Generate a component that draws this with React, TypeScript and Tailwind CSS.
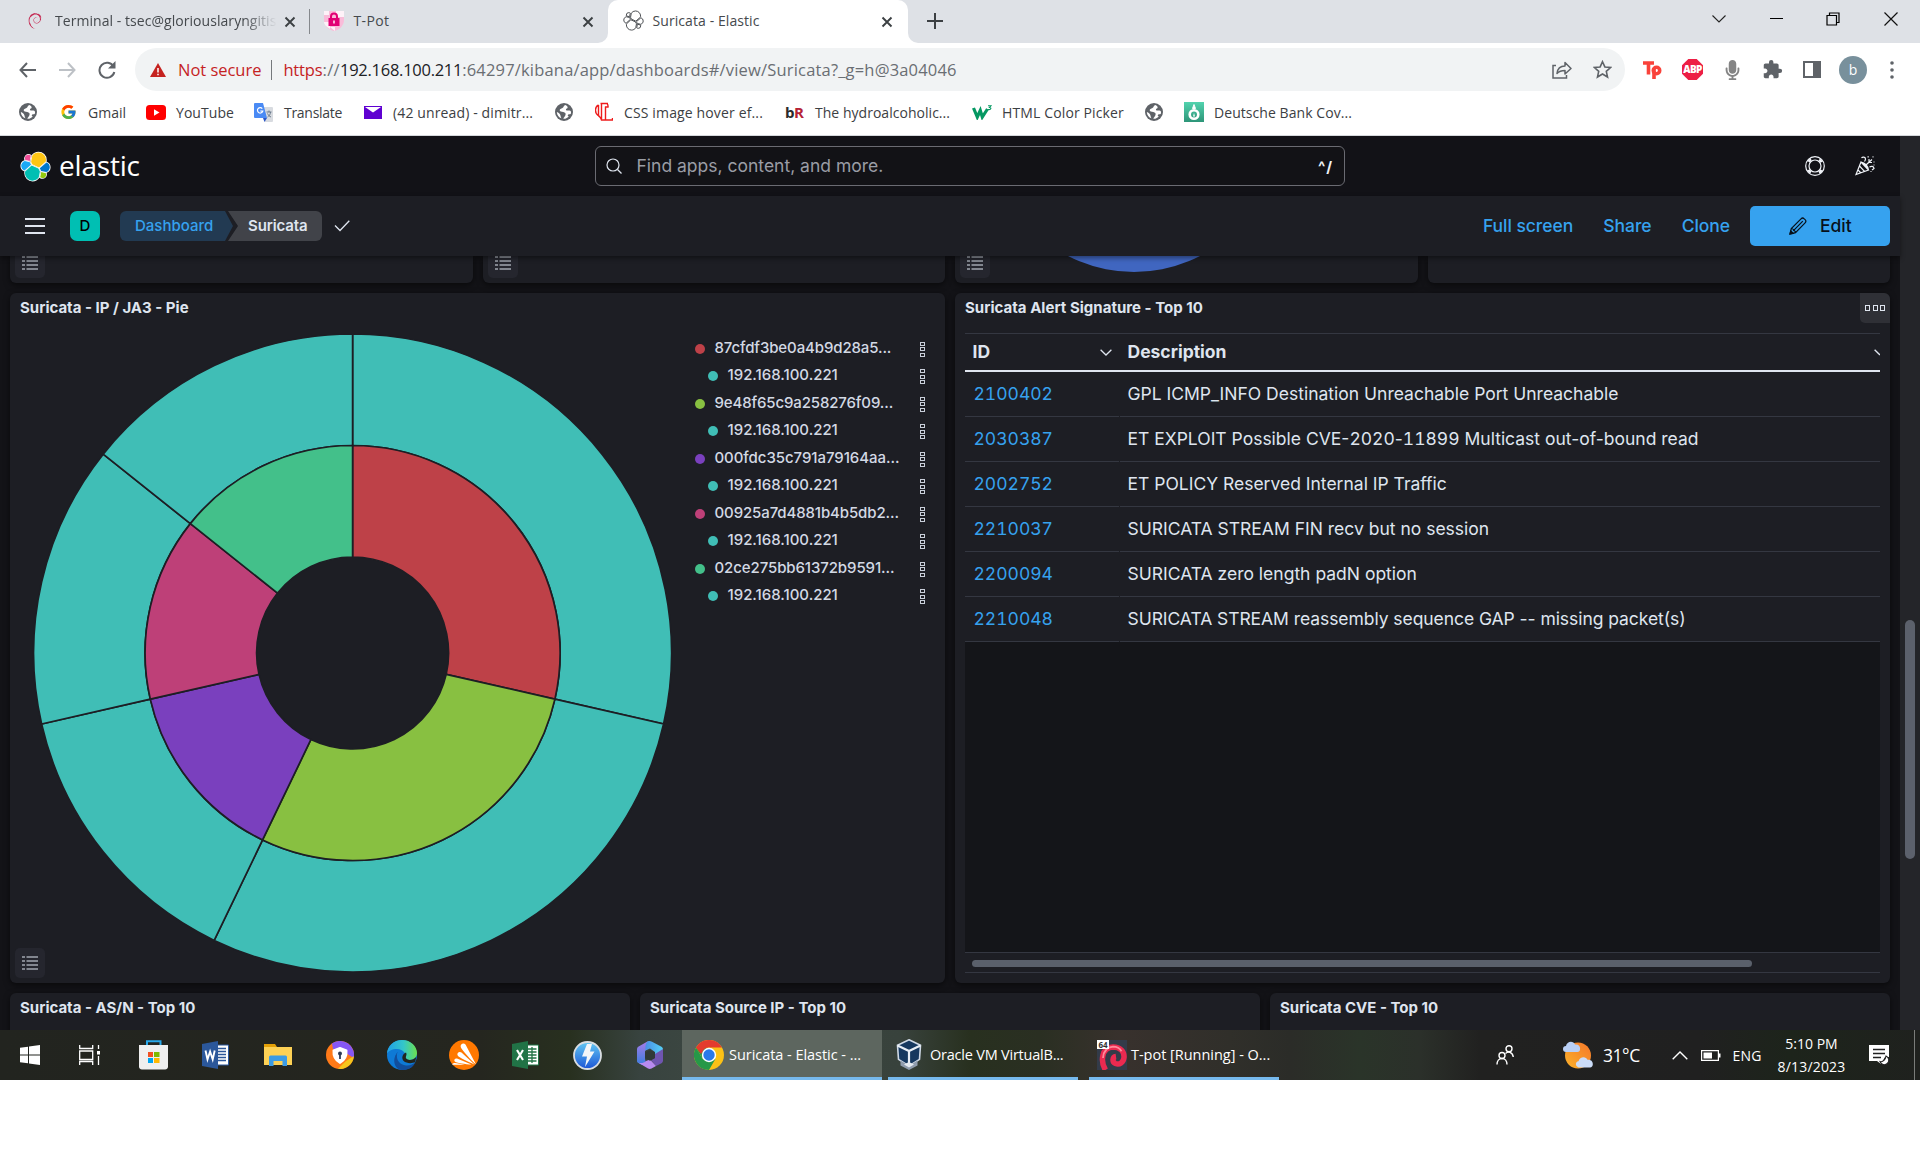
import React from "react";
import { FcGoogle } from "react-icons/fc";
import { FaMicrophone } from "react-icons/fa";
import { MdExtension } from "react-icons/md";
import { SiDebian } from "react-icons/si";

const ELASTIC = [
  { c: "#fec514", d: "M12.58 13.787l7.002 3.211 7.066-6.213a7.849 7.849 0 00.152-1.557c0-4.287-3.472-7.76-7.744-7.76a7.73 7.73 0 00-6.4 3.38l-1.176 6.124 1.1 2.815z" },
  { c: "#00bfb3", d: "M5.333 21.215a7.95 7.95 0 00-.152 1.58c0 4.3 3.49 7.8 7.777 7.8 2.58 0 4.98-1.278 6.43-3.406l1.163-6.086-1.556-2.985-7.028-3.21-6.634 6.307z" },
  { c: "#f04e98", d: "M5.29 9.094l4.799 1.138 1.05-5.479a3.79 3.79 0 00-2.303-.778 3.8 3.8 0 00-3.792 3.807c0 .449.083.894.247 1.312z" },
  { c: "#1ba9f5", d: "M4.872 10.24c-2.145.713-3.639 2.776-3.639 5.046 0 2.21 1.364 4.183 3.411 4.964l6.735-6.113-1.236-2.652-5.27-1.246z" },
  { c: "#93c90e", d: "M20.87 27.189a3.75 3.75 0 002.29.784 3.8 3.8 0 003.793-3.807c0-.46-.081-.9-.242-1.31l-4.795-1.126-1.045 5.459z" },
  { c: "#0077cc", d: "M21.848 20.564l5.28 1.238c2.146-.712 3.639-2.776 3.639-5.047a5.33 5.33 0 00-3.42-4.958l-6.905 6.077 1.406 2.69z" },
];

function ElasticLogo() {
  return (
    <svg viewBox="0 0 32 32" className="h-[31px] w-[31px] shrink-0">
      {ELASTIC.map((p) => <path key={p.c} d={p.d} fill="#fff" stroke="#fff" strokeWidth="1.6" />)}
      {ELASTIC.map((p) => <path key={p.c} d={p.d} fill={p.c} />)}
    </svg>
  );
}

function ElasticOutline() {
  return (
    <svg viewBox="0 0 32 32" className="h-[21px] w-[21px] shrink-0">
      {ELASTIC.map((p) => <path key={p.c} d={p.d} fill="#fff" stroke="#4a4d51" strokeWidth="1.5" />)}
    </svg>
  );
}

function CloseIcon({ className }: { className: string }) {
  return (
    <svg viewBox="0 0 12 12" className={className}>
      <path d="M1.5 1.5l9 9M10.5 1.5l-9 9" stroke="#3c4043" strokeWidth="1.9" />
    </svg>
  );
}

function TabBar() {
  return (
    <div className="flex h-[43px] shrink-0 bg-[#dee1e6] text-[14px] text-[#45494d]">
      <div className="flex w-[309px] shrink-0 items-center pb-[2px] pl-[27px]">
        <SiDebian className="h-[20px] w-[16px] shrink-0 text-[#c4254f]" />
        <div className="ml-[12px] w-[222px] overflow-hidden whitespace-nowrap tracking-[0.05px] [mask-image:linear-gradient(to_right,black_85%,transparent)]">
          Terminal - tsec@gloriouslaryngitis
        </div>
        <CloseIcon className="ml-[7px] mt-[2px] h-[12px] w-[12px]" />
      </div>
      <div className="mt-[9px] h-[25px] w-px shrink-0 bg-[#85888c]" />
      <div className="flex w-[298px] shrink-0 items-center pb-[2px] pl-[14px]">
        <svg viewBox="0 0 20 20" className="h-[20px] w-[20px] shrink-0">
          <path d="M0 0h20v9c0 6-5 10-10 11C5 19 0 15 0 9z" fill="#f9bcd9" />
          <path d="M12 0h8v6h-8zM0 11h6v7C2 16 0 13 0 11zM6 16h5v4zM0 0h5v4H0z" fill="#fff" opacity=".8" />
          <path d="M7 8V5.500a3 3 0 0 1 6 0V8" fill="none" stroke="#e20074" strokeWidth="2" />
          <rect x="4.500" y="7" width="11" height="8" fill="#e20074" />
          <path d="M10 9.500v3" stroke="#fff" strokeWidth="1.400" />
        </svg>
        <div className="ml-[9.500px] tracking-[0.39px]">T-Pot</div>
        <CloseIcon className="ml-[192.500px] mt-[2px] h-[12px] w-[12px]" />
      </div>
      <div className="-ml-[10px] h-full w-[10px] shrink-0 bg-white"><div className="h-full w-full rounded-br-[10px] bg-[#dee1e6]" /></div>
      <div className="flex w-[300px] shrink-0 items-center rounded-t-[10px] bg-white pb-[2px] pl-[15px]">
        <ElasticOutline />
        <div className="ml-[8.500px] tracking-[0.08px]">Suricata - Elastic</div>
        <CloseIcon className="ml-[121px] mt-[2px] h-[12px] w-[12px]" />
      </div>
      <div className="h-full w-[10px] shrink-0 bg-white"><div className="h-full w-full rounded-bl-[10px] bg-[#dee1e6]" /></div>
      <svg viewBox="0 0 16 16" className="ml-[9px] mt-[13px] h-[16px] w-[16px]"><path d="M8 0v16M0 8h16" stroke="#3c4043" strokeWidth="2" /></svg>
      <svg viewBox="0 0 14 8" className="ml-[769px] mt-[15px] h-[8px] w-[14px]"><path d="M.5.5L7 7 13.500.5" fill="none" stroke="#222" strokeWidth="1.100" /></svg>
      <div className="ml-[44px] mt-[18px] h-px w-[13px] bg-black" />
      <svg viewBox="0 0 14 14" className="ml-[43px] mt-[12px] h-[14px] w-[14px]"><path d="M1 3.500h9.500V13H1zM3.500 3.500V1H13v9.500h-2.500" fill="none" stroke="#000" strokeWidth="1.200" /></svg>
      <svg viewBox="0 0 14 14" className="ml-[44px] mt-[12px] h-[14px] w-[14px]"><path d="M.5.5l13 13M13.500.5l-13 13" stroke="#111" strokeWidth="1.200" /></svg>
    </div>
  );
}

function AddressBar() {
  return (
    <div className="flex h-[53px] shrink-0 items-center bg-white text-[16.5px]">
      <svg viewBox="0 0 18 16" className="ml-[19px] h-[16px] w-[18px]"><path d="M17 8H1.500M8 1L1.500 8 8 15" fill="none" stroke="#5f6368" strokeWidth="2" /></svg>
      <svg viewBox="0 0 18 16" className="ml-[21px] h-[16px] w-[18px]"><path d="M1 8h15.500M10 1l6.500 7L10 15" fill="none" stroke="#bdc1c6" strokeWidth="2" /></svg>
      <svg viewBox="0 0 18 18" className="ml-[22px] h-[18px] w-[18px]"><path d="M15.500 5.500A7.500 7.500 0 1 0 16.300 11" fill="none" stroke="#5f6368" strokeWidth="2" /><path d="M17.500 0v7.500H10z" fill="#5f6368" /></svg>
      <div className="ml-[19px] flex h-[43px] w-[1490px] items-center rounded-full bg-[#f1f3f4] pl-[15px]">
        <svg viewBox="0 0 16 14" className="h-[14px] w-[16px]"><path d="M8 0l8 14H0z" fill="#c5221f" /><path d="M8 5v4.500M8 10.800v1.500" stroke="#fff" strokeWidth="1.500" /></svg>
        <div className="ml-[12px] pt-px tracking-[-0.03px] text-[#c5221f]">Not secure</div>
        <div className="ml-[10px] h-[20px] w-px bg-[#75787c]" />
        <div className="ml-[11px] flex pt-px text-[#6a6e73]">
          <span className="tracking-[-0.17px] text-[#c5221f]">https</span>
          <span className="tracking-[0.4px]">://</span>
          <span className="tracking-[-0.27px] text-[#202124]">192.168.100.211</span>
          <span className="tracking-[0.18px]">:64297/kibana/app/dashboards#/view/Suricata?_g=h@3a04046</span>
        </div>
        <div className="flex-1" />
        <svg viewBox="0 0 20 18" className="h-[18px] w-[20px]" fill="none" stroke="#5f6368" strokeWidth="1.500"><path d="M4 4.500H1V17h13.500v-3" /><path d="M5 12.500c.5-5 3.500-7.500 8-7.500V1.500l6 6-6 5.500V9.500c-3.500 0-6 .8-8 3z" strokeLinejoin="round" /></svg>
        <svg viewBox="0 0 20 20" className="ml-[21px] mr-[13px] h-[19px] w-[19px]"><path d="M10 1.800l2.500 5.500 6 .6-4.500 4 1.300 6-5.300-3.100-5.300 3.100 1.300-6-4.500-4 6-.6z" fill="none" stroke="#5f6368" strokeWidth="1.700" /></svg>
      </div>
      <svg viewBox="0 0 19 18" className="ml-[18px] h-[18px] w-[19px]" fill="none" stroke="#f9423a" strokeWidth="3.600"><path d="M0 2h11M5.500 1v12.500M11 7v11" /><circle cx="13.500" cy="9.500" r="3.200" /></svg>
      <div className="ml-[20px] flex h-[21px] w-[21px] items-center justify-center bg-[#ed1e45] text-[10px] font-extrabold tracking-[-0.6px] text-white [clip-path:polygon(30%_0,70%_0,100%_30%,100%_70%,70%_100%,30%_100%,0_70%,0_30%)]">ABP</div>
      <FaMicrophone className="ml-[21px] h-[20px] w-[17px] text-[#848484]" />
      <MdExtension className="ml-[21px] h-[21px] w-[21px] text-[#5f6368]" />
      <div className="ml-[20px] h-[17px] w-[18px] border-[2.500px] border-r-[8px] border-[#5f6368]" />
      <div className="ml-[18px] flex h-[28px] w-[28px] items-center justify-center rounded-full bg-[#78909c] text-[14px] text-white">b</div>
      <svg viewBox="0 0 4 18" className="ml-[23px] h-[18px] w-[4px]" fill="#5f6368"><circle cx="2" cy="2" r="1.800" /><circle cx="2" cy="9" r="1.800" /><circle cx="2" cy="16" r="1.800" /></svg>
    </div>
  );
}

function Globe() {
  return (
    <svg viewBox="0 0 18 18" className="h-[18px] w-[18px] shrink-0">
      <circle cx="9" cy="9" r="9" fill="#5f6368" />
      <path d="M10.500 2C8.500 2.500 9 4 7.500 5s-2.800 1-2.800 2.300S6.500 8.500 8.300 9s2.700 1.200 2.200 3-1.700 2-2.200 3.800c2 .3 4.500-1 5.500-2.300-1.500-.5-1.300-1.700 0-2.200 1 0 1.700 0 2.200-1.100.2-1.800-.3-2.300-1.500-2.700-1.800 0-3 .5-3.500-.8s1-.8 1.500-1.700-.2-2.200-2-3z" fill="#fff" />
      <path d="M1.800 9c1.800.8 3 1.500 3.500 3s.4 2 1.200 3.300C3.800 14.500 2 12 1.800 9z" fill="#fff" />
    </svg>
  );
}

function Bookmarks() {
  const slot = "flex shrink-0 items-center whitespace-nowrap";
  return (
    <div className="flex h-[40px] shrink-0 items-center border-b border-[#d5d8dc] bg-white pb-[7px] pl-[19px] text-[14px] text-[#3c4043]">
      <div className={`${slot} w-[41px]`}><Globe /></div>
      <div className={`${slot} w-[86px] gap-[11px]`}><FcGoogle className="h-[18px] w-[17px]" />Gmail</div>
      <div className={`${slot} w-[108px] gap-[10px]`}>
        <svg viewBox="0 0 20 15" className="h-[15px] w-[20px]"><rect width="20" height="15" rx="3.500" fill="#f00" /><path d="M8 4.300l5.500 3.200L8 10.700z" fill="#fff" /></svg>
        <span className="tracking-[0.06px]">YouTube</span>
      </div>
      <div className={`${slot} w-[110px] gap-[11px]`}>
        <svg viewBox="0 0 19 19" className="h-[19px] w-[19px]">
          <path d="M7 4h11a1 1 0 0 1 1 1v13a1 1 0 0 1-1 1h-7z" fill="#d8dbe0" />
          <path d="M1 0h8l4 15H1a1 1 0 0 1-1-1V1a1 1 0 0 1 1-1z" fill="#4a8af4" />
          <path d="M9 15h4l-2.500 4z" fill="#2a56c6" />
          <path d="M8.300 5.700A2.700 2.700 0 1 0 8.800 8H6.300" fill="none" stroke="#fff" strokeWidth="1.200" />
          <path d="M12.500 9h5M15 7.500V9M13.500 14c2-1.500 3-3 3-5M13.500 10.500c.8 1.500 2 3 3.500 3.500" fill="none" stroke="#6b7a8c" />
        </svg>
        <span className="tracking-[-0.29px]">Translate</span>
      </div>
      <div className={`${slot} w-[191px] gap-[11px]`}>
        <svg viewBox="0 0 18 13" className="h-[13px] w-[18px]"><path d="M0 0h18v13H0z" fill="#5f01d1" /><path d="M1 1h16L9 6.500z" fill="#fff" /></svg>
        <span className="tracking-[0.13px]">(42 unread) - dimitr...</span>
      </div>
      <div className={`${slot} w-[40px]`}><Globe /></div>
      <div className={`${slot} w-[190px] gap-[11px]`}>
        <svg viewBox="0 0 18 20" className="h-[20px] w-[18px]" fill="none" stroke="#ee1c1c" strokeWidth="1.400"><path d="M3.500 3C-.5 5-.5 10.500 3 13.500M5.500 1.500h7.500M6.500 1.500v15.500M10.500 4.500v13.500h7V16M12 1.500c1 1 1.200 2 1 3.500h-3M3.500 3v10.500c1 1.500 2.500 2 3 4.500h4" /></svg>
        <span className="tracking-[0.14px]">CSS image hover ef...</span>
      </div>
      <div className={`${slot} w-[187px] gap-[11px]`}>
        <span className="flex w-[19px] text-[15px] font-bold tracking-[-0.5px] text-[#2b2b2b]">b<span className="text-[#b52236]">R</span></span>
        <span className="tracking-[0.03px]">The hydroalcoholic...</span>
      </div>
      <div className={`${slot} w-[173px] gap-[10px]`}>
        <svg viewBox="0 0 20 15" className="h-[15px] w-[20px]" fill="none" stroke="#059862"><path d="M1.500 3l3.800 9 3-6.500 2 6.500L15.500 4" strokeWidth="3.200" /><path d="M16 .8h3l-1.500 1.700c2 0 2 2.500-1.500 2" strokeWidth="1.100" /></svg>
        <span className="tracking-[0.13px]">HTML Color Picker</span>
      </div>
      <div className={`${slot} w-[39px]`}><Globe /></div>
      <div className={`${slot} gap-[10px]`}>
        <svg viewBox="0 0 20 20" className="h-[20px] w-[20px]"><defs><linearGradient id="bk" x2="0" y2="1"><stop stopColor="#52d3ae" /><stop offset="1" stopColor="#2d9578" /></linearGradient></defs><path d="M0 0h20v20H0z" fill="url(#bk)" /><path d="M10 2.500l1.500 4h-3z" fill="#fff" stroke="#fff" /><circle cx="10" cy="12.500" r="4.300" fill="none" stroke="#fff" strokeWidth="2.600" /><path d="M10 11l1 3.500H9z" fill="#fff" /></svg>
        <span className="tracking-[0.06px]">Deutsche Bank Cov...</span>
      </div>
    </div>
  );
}

function ElasticHeader() {
  return (
    <div className="flex h-[60px] shrink-0 items-center bg-[#121217]">
      <div className="flex w-[595px] items-center pl-[20px] text-white">
        <ElasticLogo />
        <span className="ml-[8px] mt-[-2px] text-[28px] leading-none tracking-[-0.2px]">elastic</span>
      </div>
      <div className="flex h-[40px] w-[750px] items-center rounded-[6px] border border-[#6a6b72] bg-[#121216] pl-[10px] pr-[11px] font-[Inter]">
        <svg viewBox="0 0 16 16" className="h-[16px] w-[16px]"><circle cx="7" cy="7" r="6" fill="none" stroke="#dfe5ef" strokeWidth="1.200" /><path d="M11.500 11.500l4 4" stroke="#dfe5ef" strokeWidth="1.200" /></svg>
        <span className="ml-[14.500px] text-[17.5px] text-[#9a9da5]">Find apps, content, and more.</span>
        <span className="ml-auto pt-[2px] text-[15px] font-bold tracking-[1px] text-[#f0f2f6]">^/</span>
      </div>
      <svg viewBox="0 0 20 20" className="ml-[460px] h-[20px] w-[20px]" fill="none" stroke="#f0f3f8">
        <circle cx="10" cy="10" r="9.300" strokeWidth="1.200" /><circle cx="10" cy="10" r="6" strokeWidth="1.200" />
        <circle cx="10" cy="10" r="7.700" strokeWidth="2.600" strokeDasharray="3.600 8.495" strokeDashoffset="-4.250" />
      </svg>
      <svg viewBox="0 0 20 20" className="ml-[30px] h-[20px] w-[20px]" fill="none" stroke="#f0f3f8" strokeWidth="1.200">
        <path d="M6 6L1 18.500 13.500 14zM4.500 10l5 5.300M3 14l3 3M6 6c2.500 1.500 5.500 4.500 7.500 8M6 6c4 .5 7 4 7.500 8M6.500 2c1-1.300 4-1.200 4 1 0 1-.5 1.800-1 2.500M11.500 8.500L17 3.500M14 6V3M14 6.500h3M14.500 11c2-1.200 4-.8 4.500 1.500L17 14" />
        <path d="M12.500.8h1.300M17.500.8h1M18.500 6h1M15.500 15.500h1M18.500 9h1" />
      </svg>
    </div>
  );
}

function NavBar() {
  return (
    <div className="relative z-10 flex h-[60px] shrink-0 items-center bg-[#1d1e24] font-[Inter] shadow-[0_2px_5px_rgba(0,0,0,0.45)]">
      <div className="ml-[25px] flex w-[20px] flex-col gap-[5px]">
        <div className="h-[2px] bg-[#dfe5ef]" /><div className="h-[2px] bg-[#dfe5ef]" /><div className="h-[2px] bg-[#dfe5ef]" />
      </div>
      <div className="ml-[25px] flex h-[30px] w-[30px] items-center justify-center rounded-[7px] bg-[#00bfb3] text-[15px] font-medium text-black">D</div>
      <div className="ml-[20px] flex h-[30px] w-[113px] items-center rounded-l-[6px] bg-[#223a52] pl-[15px] text-[15px] font-medium text-[#36a2ef] [clip-path:polygon(0_0,105px_0,100%_50%,105px_100%,0_100%)]">Dashboard</div>
      <div className="ml-[-5px] flex h-[30px] w-[94px] items-center rounded-r-[6px] bg-[#414349] pl-[20px] text-[15px] font-semibold tracking-[-0.12px] text-[#dfe5ef] [clip-path:polygon(0_0,100%_0,100%_100%,0_100%,10px_50%)]">Suricata</div>
      <svg viewBox="0 0 16 12" className="ml-[12px] h-[12px] w-[16px]"><path d="M1 5.500l5 5L15.300.8" fill="none" stroke="#dfe5ef" strokeWidth="1.300" /></svg>
      <div className="ml-auto flex items-center gap-[30px] text-[17.5px] font-medium text-[#36a2ef]">
        <span className="tracking-[-0.05px]">Full screen</span>
        <span>Share</span>
        <span className="mr-[-10px] tracking-[-0.05px]">Clone</span>
        <div className="mr-[10px] flex h-[40px] w-[140px] items-center rounded-[5px] bg-[#36a2ef] pl-[39px] text-[#07101a]">
          <svg viewBox="0 0 18 18" className="h-[18px] w-[18px]" fill="none" stroke="#07101a" strokeWidth="1.200"><path d="M1 17l1.300-5.500L12 1.800c1-1 2.200-1 3.200 0l.9.9c1 1 1 2.200 0 3.200L6.500 15.700zM4.200 13.800L13.800 4.200M2.300 11.500c1.500 0 3.900 2.200 4.200 4.200" /><path d="M1 17l.8-3.200 2.500 2.500z" fill="#07101a" /></svg>
          <span className="ml-[13px]">Edit</span>
        </div>
      </div>
    </div>
  );
}

function LegendButton() {
  return (
    <div className="flex h-[30px] w-[30px] items-center justify-center rounded-[5px] bg-[#25262e]">
      <svg viewBox="0 0 16 14" className="h-[14px] w-[16px]"><path d="M0 1h3M4.500 1H16M0 5h3M4.500 5H16M0 9h3M4.500 9H16M0 13h3M4.500 13H16" stroke="#dfe5ef" strokeWidth="1.200" /></svg>
    </div>
  );
}

const PANEL = "rounded-[6px] bg-[#1d1e24] shadow-[0_2px_6px_rgba(0,0,0,0.55)]";

function TopRow() {
  return (
    <div className="flex h-[27px] gap-[10px] pl-[10px]">
      {["w-[463px]", "w-[462px]", "w-[463px]", "w-[462px]"].map((w, i) => (
        <div key={i} className={`${PANEL} ${w} relative shrink-0 rounded-t-none`}>
          {i < 3 && <div className="mt-[-8px] pl-[5px]"><LegendButton /></div>}
          {i === 2 && (
            <svg viewBox="0 0 140 17" className="absolute left-[109px] top-0 h-[17px] w-[140px]"><circle cx="70" cy="-128" r="144" fill="#4066c0" /></svg>
          )}
        </div>
      ))}
    </div>
  );
}

const CX = 320.6, CY = 320;
const pt = (r: number, f: number) =>
  `${(CX + r * Math.sin(f * 2 * Math.PI)).toFixed(2)} ${(CY - r * Math.cos(f * 2 * Math.PI)).toFixed(2)}`;
const ring = (r0: number, r1: number, a: number, b: number) =>
  `M${pt(r0, a)}L${pt(r1, a)}A${r1} ${r1} 0 0 1 ${pt(r1, b)}L${pt(r0, b)}A${r0} ${r0} 0 0 0 ${pt(r0, a)}Z`;
const SLICES = [
  { a: 0, b: 2 / 7, c: "#be4148", label: "87cfdf3be0a4b9d28a5...", t: "tracking-[-0.12px]" },
  { a: 2 / 7, b: 4 / 7, c: "#88c041", label: "9e48f65c9a258276f09...", t: "tracking-[-0.14px]" },
  { a: 4 / 7, b: 5 / 7, c: "#7a40be", label: "000fdc35c791a79164aa...", t: "tracking-[-0.06px]" },
  { a: 5 / 7, b: 6 / 7, c: "#be4078", label: "00925a7d4881b4b5db2...", t: "tracking-[-0.12px]" },
  { a: 6 / 7, b: 1, c: "#43c08a", label: "02ce275bb61372b9591...", t: "tracking-[-0.1px]" },
];

function Squares({ vertical }: { vertical?: boolean }) {
  const sq = vertical ? "h-[4px] w-[5px] border border-[#c9cfda]" : "h-[6px] w-[5px] border-[1.500px] border-[#dfe5ef]";
  return (
    <div className={vertical ? "flex flex-col gap-[1.500px]" : "flex gap-[2.500px]"}>
      <div className={sq} /><div className={sq} /><div className={sq} />
    </div>
  );
}

function LegendRow({ color, label, sub, t }: { color: string; label: string; sub?: boolean; t: string }) {
  return (
    <div className={`flex h-[27.5px] items-center ${sub ? "pl-[13px]" : ""}`}>
      <svg viewBox="0 0 10 10" className="mt-[2px] h-[10px] w-[10px]"><circle cx="5" cy="5" r="5" fill={color} /></svg>
      <span className={`ml-[9.500px] ${t}`}>{label}</span>
      <div className="ml-auto mt-[3px]"><Squares vertical /></div>
    </div>
  );
}

function PiePanel() {
  return (
    <div className={`${PANEL} flex w-[935px] shrink-0 flex-col`}>
      <div className="h-[30px] pl-[10px] text-[15px] font-bold leading-[30px] text-[#dfe5ef]">Suricata - IP / JA3 - Pie</div>
      <div className="relative mt-[10px] flex pl-[22px]">
        <svg viewBox="0 0 642 642" className="h-[642px] w-[642px] shrink-0" stroke="#1d1e24" strokeWidth="1.700">
          {SLICES.map((s) => <path key={s.c} d={ring(207.5, 319, s.a, s.b)} fill="#40beb6" />)}
          {SLICES.map((s) => <path key={s.c} d={ring(96, 207.5, s.a, s.b)} fill={s.c} />)}
        </svg>
        <div className="ml-[21px] mt-[1px] w-[230px] text-[15px] font-medium text-[#d3d9e4]">
          {SLICES.map((s) => (
            <React.Fragment key={s.c}>
              <LegendRow color={s.c} label={s.label} t={s.t} />
              <LegendRow color="#40beb6" label="192.168.100.221" sub t="tracking-[-0.02px]" />
            </React.Fragment>
          ))}
        </div>
        <div className="absolute bottom-[-3px] left-[5px]"><LegendButton /></div>
      </div>
    </div>
  );
}

const N = ({ children }: { children: React.ReactNode }) => <span className="tabular-nums">{children}</span>;
const ROWS: [string, React.ReactNode][] = [
  ["2100402", "GPL ICMP_INFO Destination Unreachable Port Unreachable"],
  ["2030387", <>ET EXPLOIT Possible CVE-<N>2020</N>-<N>11899</N> Multicast out-of-bound read</>],
  ["2002752", "ET POLICY Reserved Internal IP Traffic"],
  ["2210037", "SURICATA STREAM FIN recv but no session"],
  ["2200094", "SURICATA zero length padN option"],
  ["2210048", <span className="tracking-[-0.06px]">SURICATA STREAM reassembly sequence GAP -- missing packet(s)</span>],
];

function TablePanel() {
  return (
    <div className={`${PANEL} flex w-[935px] shrink-0 flex-col`}>
      <div className="flex h-[30px] justify-between">
        <span className="pl-[10px] text-[15px] font-bold leading-[30px] tracking-[0.02px] text-[#dfe5ef]">Suricata Alert Signature - Top 10</span>
        <div className="flex w-[30px] items-center justify-center rounded-bl-[5px] rounded-tr-[6px] bg-[#2f3036]"><Squares /></div>
      </div>
      <div className="mx-[10px] mt-[10px] flex h-[640px] flex-col text-[17.5px] text-[#dfe5ef]">
        <div className="flex h-[39px] shrink-0 items-center border-b-2 border-t border-b-[#dfe5ef] border-t-[#343741] pl-[7.500px] font-bold">
          <span className="w-[127px]">ID</span>
          <svg viewBox="0 0 12 7" className="h-[7px] w-[12px]"><path d="M.6.8L6 6 11.400.8" fill="none" stroke="#dfe5ef" strokeWidth="1.300" /></svg>
          <span className="ml-[16px]">Description</span>
          <svg viewBox="0 0 6 7" className="ml-auto h-[7px] w-[6px]"><path d="M.6.8L6 6" stroke="#dfe5ef" strokeWidth="1.400" /></svg>
        </div>
        {ROWS.map(([id, text]) => (
          <div key={id} className="flex h-[45px] shrink-0 items-center gap-px">
            <div className="flex h-full w-[154px] items-center border-b border-[#343741] pl-[8.500px] tabular-nums text-[#36a2ef]">{id}</div>
            <div className="flex h-full flex-1 items-center border-b border-[#343741] pl-[7.500px]"><span>{text}</span></div>
          </div>
        ))}
        <div className="flex-1 bg-[#141519]" />
        <div className="flex h-[21px] shrink-0 items-center border-y border-[#343741] pl-[7px]">
          <div className="mt-px h-[7px] w-[780px] rounded-full bg-[#5a606b]" />
        </div>
      </div>
    </div>
  );
}

function Dashboard() {
  return (
    <div className="flex h-[894px] shrink-0 overflow-hidden bg-[#131317]">
      <div className="flex w-[1900px] shrink-0 flex-col">
        <ElasticHeader />
        <NavBar />
        <div className="shrink-0 font-[Inter]">
          <TopRow />
          <div className="mt-[10px] flex h-[690px] gap-[10px] pl-[10px]">
            <PiePanel />
            <TablePanel />
          </div>
          <div className="mt-[10px] flex h-[50px] gap-[10px] pl-[10px] text-[15px] font-bold leading-[30px] text-[#dfe5ef]">
            <div className={`${PANEL} w-[620px] pl-[10px]`}>Suricata - AS/N - Top 10</div>
            <div className={`${PANEL} w-[620px] pl-[10px]`}>Suricata Source IP - Top 10</div>
            <div className={`${PANEL} w-[620px] pl-[10px]`}>Suricata CVE - Top 10</div>
          </div>
        </div>
      </div>
      <div className="w-[20px] bg-[#242529] pl-[5px]">
        <div className="mt-[484px] h-[239px] w-[10px] rounded-full bg-[#5c616c]" />
      </div>
    </div>
  );
}

const APP_ICONS = [
  <svg viewBox="0 0 29 30" className="h-[30px] w-[29px]"><path d="M8 6V1.200h13.500V6" fill="none" stroke="#29a8ea" strokeWidth="2" /><path d="M0 5h29v21a3 3 0 0 1-3 3.500H3A3 3 0 0 1 0 26z" fill="#efefef" /><path d="M9 12h5v5H9z" fill="#f25022" /><path d="M15 12h5.500v5H15z" fill="#7fba00" /><path d="M9 18h5v5H9z" fill="#00a4ef" /><path d="M15 18h5.500v5H15z" fill="#ffb900" /></svg>,
  <svg viewBox="0 0 27 28" className="h-[28px] w-[27px]"><path d="M14 4h12.500v20H14z" fill="#fff" stroke="#2b579a" /><path d="M15 7.500h9M15 10.500h9M15 13.500h9M15 16.500h9M15 19.500h9" stroke="#2b579a" strokeWidth="1.600" /><path d="M0 3l16-3v28L0 25z" fill="#2b579a" /><path d="M3.500 9.500l2 9 2.600-8 2.600 8 2-9" fill="none" stroke="#fff" strokeWidth="1.900" /></svg>,
  <svg viewBox="0 0 28 24" className="h-[24px] w-[28px]"><path d="M0 1h11l2 3H0z" fill="#e3a008" /><path d="M0 4h28v18H0z" fill="#fdd155" /><path d="M5 23V14a1.500 1.500 0 0 1 1.500-1.500h15A1.500 1.500 0 0 1 23 14v9h-4.500v-5h-9v5z" fill="#3b9be5" /></svg>,
  <svg viewBox="0 0 28 28" className="h-[28px] w-[28px]"><circle cx="14" cy="14" r="14" fill="#ff7a18" /><path d="M6 2.500A14 14 0 0 1 27.700 17L20 12 7 8z" fill="#8657f5" /><path d="M27.900 15A14 14 0 0 1 12 27.800L20 20z" fill="#f5c51c" /><path d="M14 7l6.500 2.500c.5 5.500-1.500 9.500-6.500 12.500-5-3-7-7-6.500-12.500z" fill="#fff" stroke="#fff" strokeWidth="2" strokeLinejoin="round" /><circle cx="14" cy="12.500" r="2" fill="#2c3a55" /><path d="M14 13v5" stroke="#2c3a55" strokeWidth="1.800" /></svg>,
  <svg viewBox="0 0 30 30" className="h-[30px] w-[30px]"><defs><linearGradient id="eg" x2="1"><stop stopColor="#1f9fe8" /><stop offset=".55" stopColor="#34c6c9" /><stop offset="1" stopColor="#6be04e" /></linearGradient></defs><circle cx="15" cy="15" r="15" fill="#0e7ad6" /><path d="M11 12c-3 4-3 11 3 14.500 4 2.500 10 1 13.500-2.500A15 15 0 0 1 15 30C8 27 6 15 11 12z" fill="#114e9c" /><path d="M10 14c-1 6 3 11 9 11.500 4 .3 7-1 9.500-3.500-2.500 6-8 8-13.500 8-8 0-10-12-5-16z" fill="#114e9c" /><path d="M0 14C0 6 7 0 15 0c9 0 15 6.500 15 13 0 4-3 7-7.500 7-3 0-4.500-1-3.800-2.500C20 15 16.500 9 10 9 5 9 1 11 0 14z" fill="url(#eg)" /><path d="M19 12.500c1.500 2.500-1 4 .2 6 1.800 2.200 7 2 10-1.500l-1 5c-3 1.800-9 1.500-11.500-1s-1.500-7 2.300-8.500z" fill="#22251f" /></svg>,
  <svg viewBox="0 0 30 30" className="h-[30px] w-[30px]"><circle cx="15" cy="15" r="15" fill="#ff7800" /><path d="M27 24.500L16.500 4.500c-1.500-2-5.500-1-4.800 2.500.5 2 10 13 15.300 17.500zM25.500 24.500L12.500 12.500c-2-1.500-5 .5-3.800 3 1.200 2 12 7 16.800 9zM22.500 24.500L8 18.500c-2-.5-3.500 1.500-2.200 3 1 1 11 3 16.700 3zM16 24.700c-4-.5-9-2.200-11-1.700-1.500.5-2 1.200-1.500 1.700z" fill="#fff" /></svg>,
  <svg viewBox="0 0 27 28" className="h-[28px] w-[27px]"><path d="M14 4h12.500v20H14z" fill="#fff" stroke="#217346" /><path d="M16 8h8.500M16 11h8.500M16 14h8.500M16 17h8.500M16 20h8.500M20 6v16" stroke="#217346" strokeWidth="1.300" /><path d="M0 3l16-3v28L0 25z" fill="#217346" /><path d="M5 9l6 10M11 9L5 19" stroke="#fff" strokeWidth="2.100" /></svg>,
  <svg viewBox="0 0 29 29" className="h-[29px] w-[29px]"><defs><linearGradient id="dg" x2="0" y2="1"><stop stopColor="#63c9f3" /><stop offset="1" stopColor="#1c55d6" /></linearGradient></defs><circle cx="14.500" cy="14.500" r="13.500" fill="url(#dg)" stroke="#d9dde1" strokeWidth="1.800" /><path d="M14 3h5l-2 7.500h4.500L12 26l2-10.500H9z" fill="#f4f6f8" /></svg>,
  <svg viewBox="0 0 26 28" className="h-[28px] w-[26px]"><defs><linearGradient id="mg" x2="0" y2="1"><stop stopColor="#a97bea" /><stop offset="1" stopColor="#3a7ede" /></linearGradient><linearGradient id="mb" x2="1"><stop stopColor="#4a8fe6" /><stop offset="1" stopColor="#55d0f5" /></linearGradient></defs><path d="M13 0L11.500 7 8 10v8l1 4-4 2-4-2.200a2 2 0 0 1-1-2V8a3 3 0 0 1 1.200-2.300L10 .8z" fill="url(#mg)" /><path d="M10 .8a5 5 0 0 1 5 0l9.500 5A3 3 0 0 1 26 8v10l-8-5v-2l-5-3.500-4.500 2C8 5 9 2.500 10 .8z" fill="url(#mb)" /><path d="M18 13l8-5v12a3 3 0 0 1-1.500 2.200L19 25l-5-6 4-2z" fill="#6f55b0" /><path d="M1 21.500c3 1.200 6 .5 8-1.500l4-1.500 6 6.500-4.500 2.500a4 4 0 0 1-3.500 0z" fill="#b98af0" /><path d="M13 9l5 2.500V17l-5 2.800L8 17v-5.500z" fill="#303a38" /></svg>,
];

function Taskbar() {
  return (
    <div className="flex h-[50px] shrink-0 items-center bg-[linear-gradient(to_right,#22241f_0px,#25261f_480px,#28301f_570px,#38433f_640px,#3b4641_690px,#38423c_900px,#28301f_970px,#2a2f22_1040px,#38312d_1120px,#302f2a_1230px,#2b2c28_1290px,#2a3429_1360px,#2b302a_1420px,#212120_1480px,#202020_1700px,#1d241b_1790px,#1f211e_1920px)] text-white">
      <div className="flex w-[60px] shrink-0 justify-center">
        <svg viewBox="0 0 20 20" className="h-[20px] w-[20px]" fill="#fff"><path d="M0 2.800l8-1.100v7.800H0zM9 1.500L20 0v9.500H9zM0 10.500h8v7.800l-8-1.100zM9 10.500h11V20L9 18.500z" /></svg>
      </div>
      <div className="flex w-[62px] shrink-0 justify-center pr-[2px]">
        <svg viewBox="0 0 22 20" className="h-[20px] w-[22px]" fill="none" stroke="#fff" strokeWidth="1.300"><path d="M.7 0v3.500h13V0M.7 6h13v8.500H.7zM.7 20v-3.500h13V20M19.500 0v4M19.500 11v9" /><path d="M18 6h3v3.500h-3z" fill="#fff" stroke="none" /></svg>
      </div>
      {APP_ICONS.map((icon, i) => <div key={i} className="flex w-[62px] shrink-0 justify-center pl-px">{icon}</div>)}
      <div className="ml-[2px] flex h-full w-[200px] shrink-0 items-center border-b-[3px] border-[#76b9ed] bg-[#5d665f] pl-[12px] pt-[3px] text-[14.5px]">
        <svg viewBox="0 0 30 30" className="h-[30px] w-[30px]"><circle cx="15" cy="15" r="15" fill="#fbc116" /><path d="M2 7.500A15 15 0 0 0 15 30l6.500-11.300L8.500 18.700z" fill="#269848" /><path d="M2 7.500l6.500 11.200L15 8z" fill="#269848" /><path d="M2 7.500A15 15 0 0 1 28 7.500H15a7 7 0 0 0-6.500 4.500L7 14z" fill="#e33b2e" /><circle cx="15" cy="15" r="7.200" fill="#fff" /><circle cx="15" cy="15" r="5.700" fill="#2a79ea" /></svg>
        <span className="ml-[5px] tracking-[-0.04px]">Suricata - Elastic - ...</span>
      </div>
      <div className="ml-[6px] flex h-full w-[190px] shrink-0 items-center border-b-[3px] border-[#76b9ed] pl-[8px] pt-[3px] text-[14.5px]">
        <svg viewBox="0 0 26 32" className="h-[32px] w-[26px]"><path d="M13 .8l11.500 5.500-1 14L13 27 2.500 20.300l-1-14z" fill="#16385f" stroke="#cfd9e6" strokeWidth="1.600" /><path d="M1.500 6.500L13 12l11.500-5.500M13 12v15" fill="none" stroke="#e8eef5" strokeWidth="2.200" /><path d="M4.500 21.500L13 27l8.500-5.500v5L13 31l-8.500-4.500z" fill="#8f9cad" /><path d="M8 25.500l5 3 5-3-5-2.500z" fill="#e3e9f0" /></svg>
        <span className="ml-[8px] whitespace-nowrap tracking-[-0.22px]">Oracle VM VirtualB...</span>
      </div>
      <div className="ml-[11px] flex h-full w-[190px] shrink-0 items-center border-b-[3px] border-[#76b9ed] pl-[8px] pt-[3px] text-[14.5px]">
        <div className="relative h-[30px] w-[30px] bg-[#333b49]">
          <svg viewBox="0 0 30 30" className="h-[30px] w-[30px]"><path d="M8.500 30C3.500 22 4 7.500 16 7c7.500 0 11.500 5 11 10.500-.5 5-4.500 7.500-8.500 6-3.500-1.500-3.300-6.500.5-7" fill="none" stroke="#ea2a50" strokeWidth="5.500" /><path d="M6 18c.5-7 4-10.800 10-11.300 4 0 7 2 8.500 4.500" fill="none" stroke="#ff8a9b" strokeWidth="1.800" /></svg>
          <div className="absolute left-0 top-0 flex h-[9px] w-[12px] items-center justify-center bg-white text-[8px] font-bold leading-none text-[#333]">64</div>
        </div>
        <span className="ml-[4px] whitespace-nowrap tracking-[-0.02px]">T-pot [Running] - O...</span>
      </div>
      <svg viewBox="0 0 18 20" className="ml-[217px] h-[20px] w-[18px] shrink-0" fill="none" stroke="#fff" strokeWidth="1.400"><circle cx="13" cy="3.700" r="3" /><circle cx="6" cy="10.500" r="3" /><path d="M1 19.500c0-3.500 2-6 5-6s5 2.500 5 6M9.500 8.500C12 6 16.500 7 17.300 12" /></svg>
      <svg viewBox="0 0 30 28" className="ml-[49px] h-[28px] w-[30px] shrink-0"><defs><linearGradient id="sun" x1="1" y1="0" x2="0" y2="1"><stop stopColor="#f5772a" /><stop offset="1" stopColor="#fbb22a" /></linearGradient></defs><circle cx="15" cy="14.500" r="13" fill="url(#sun)" /><path d="M3 11a3 3 0 0 1 0-6c.5-5 7.500-6 9-1.500 4-.5 5.500 2.500 5 5 0 1.500-1 2.500-2.500 2.500z" fill="#b9cff5" /><path d="M15.500 26.500a3.200 3.200 0 0 1 0-6.300c1-4.700 7.500-5.500 9-1.400 4-.3 5.500 2.200 5.300 4.700 0 1.500-1 3-2.800 3z" fill="#cbdcf8" /></svg>
      <span className="ml-[10px] w-[37px] pt-px text-[17.500px] tracking-[-0.45px]">31°C</span>
      <svg viewBox="0 0 16 9" className="ml-[32px] h-[9px] w-[16px] shrink-0"><path d="M.7 8.300L8 1l7.300 7.300" fill="none" stroke="#fff" strokeWidth="1.400" /></svg>
      <svg viewBox="0 0 20 11" className="ml-[12.500px] h-[11px] w-[20px] shrink-0"><path d="M.6.6h16.800v9.800H.6z" fill="none" stroke="#fff" strokeWidth="1.200" /><path d="M2.500 2.500h8.500v6H2.500zM18 3.500h1.500v4H18z" fill="#fff" /></svg>
      <span className="ml-[12px] w-[29px] text-[14px] tracking-[0.17px]">ENG</span>
      <div className="ml-[10px] flex w-[80px] flex-col items-center pb-px text-[14px] leading-[23px]">
        <span>5:10 PM</span>
        <span className="tracking-[0.19px]">8/13/2023</span>
      </div>
      <svg viewBox="0 0 21 21" className="ml-[17px] h-[21px] w-[21px] shrink-0"><path d="M0 0h20v12h-4l-4 7-4-3H0z" fill="#fff" /><path d="M4 4.500h12M4 8.500h12M4 12.500h8" stroke="#222" strokeWidth="1.300" /><path d="M17 11a4.500 4.500 0 1 1-6 5.500c3 1 5.500-2 6-5.500z" fill="#fff" stroke="#222" strokeWidth="1.100" /></svg>
      <div className="ml-auto mr-[5px] h-full w-px bg-[#7a7c79]" />
    </div>
  );
}

export default function App() {
  return (
    <div className="flex h-[1168px] w-[1920px] flex-col overflow-hidden bg-white font-['Open_Sans',sans-serif]">
      <TabBar />
      <AddressBar />
      <Bookmarks />
      <Dashboard />
      <Taskbar />
    </div>
  );
}
